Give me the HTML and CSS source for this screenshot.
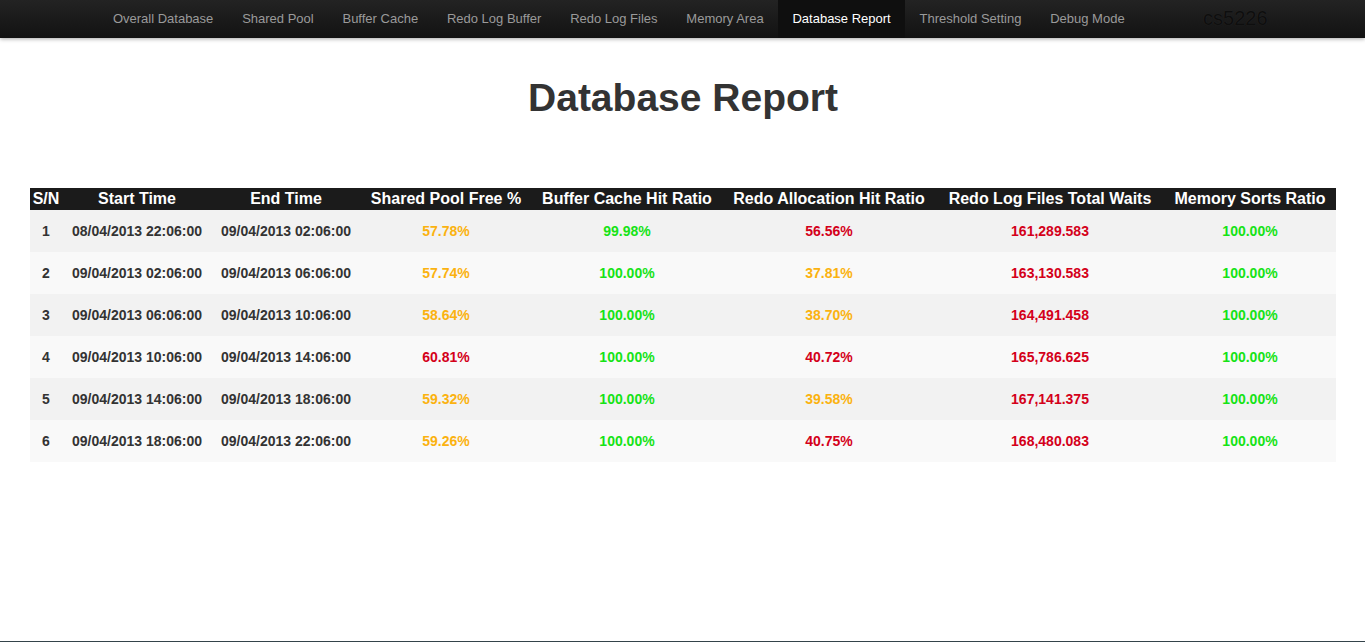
FILE: index.html
```html
<!DOCTYPE html>
<html lang="en">
<head>
<meta charset="utf-8">
<title>Database Report</title>
<link rel="stylesheet" href="styles.css">
</head>
<body>
<header class="navbar">
  <div class="container">
    <ul class="nav">
      <li><a href="#">Overall Database</a></li>
      <li><a href="#">Shared Pool</a></li>
      <li><a href="#">Buffer Cache</a></li>
      <li><a href="#">Redo Log Buffer</a></li>
      <li><a href="#">Redo Log Files</a></li>
      <li><a href="#">Memory Area</a></li>
      <li class="active"><a href="#">Database Report</a></li>
      <li><a href="#">Threshold Setting</a></li>
      <li><a href="#">Debug Mode</a></li>
    </ul>
    <span class="brand">cs5226</span>
  </div>
</header>

<main class="content">
  <h1 class="title">Database Report</h1>
  <table class="report">
    <colgroup>
      <col class="c-sn"><col class="c-start"><col class="c-end"><col class="c-sp">
      <col class="c-bc"><col class="c-ra"><col class="c-rl"><col class="c-ms">
    </colgroup>
    <thead>
      <tr>
        <th>S/N</th><th>Start Time</th><th>End Time</th><th>Shared Pool Free %</th>
        <th>Buffer Cache Hit Ratio</th><th>Redo Allocation Hit Ratio</th><th>Redo Log Files Total Waits</th><th>Memory Sorts Ratio</th>
      </tr>
    </thead>
    <tbody>
      <tr>
        <td>1</td><td>08/04/2013 22:06:00</td><td>09/04/2013 02:06:00</td>
        <td class="warn">57.78%</td><td class="good">99.98%</td><td class="bad">56.56%</td><td class="bad">161,289.583</td><td class="good">100.00%</td>
      </tr>
      <tr>
        <td>2</td><td>09/04/2013 02:06:00</td><td>09/04/2013 06:06:00</td>
        <td class="warn">57.74%</td><td class="good">100.00%</td><td class="warn">37.81%</td><td class="bad">163,130.583</td><td class="good">100.00%</td>
      </tr>
      <tr>
        <td>3</td><td>09/04/2013 06:06:00</td><td>09/04/2013 10:06:00</td>
        <td class="warn">58.64%</td><td class="good">100.00%</td><td class="warn">38.70%</td><td class="bad">164,491.458</td><td class="good">100.00%</td>
      </tr>
      <tr>
        <td>4</td><td>09/04/2013 10:06:00</td><td>09/04/2013 14:06:00</td>
        <td class="bad">60.81%</td><td class="good">100.00%</td><td class="bad">40.72%</td><td class="bad">165,786.625</td><td class="good">100.00%</td>
      </tr>
      <tr>
        <td>5</td><td>09/04/2013 14:06:00</td><td>09/04/2013 18:06:00</td>
        <td class="warn">59.32%</td><td class="good">100.00%</td><td class="warn">39.58%</td><td class="bad">167,141.375</td><td class="good">100.00%</td>
      </tr>
      <tr>
        <td>6</td><td>09/04/2013 18:06:00</td><td>09/04/2013 22:06:00</td>
        <td class="warn">59.26%</td><td class="good">100.00%</td><td class="bad">40.75%</td><td class="bad">168,480.083</td><td class="good">100.00%</td>
      </tr>
    </tbody>
  </table>
</main>
<div class="edge"></div>
</body>
</html>
```

FILE: styles.css
```css
html, body {
  margin: 0;
  padding: 0;
  background: #fff;
  font-family: "Liberation Sans", Arial, sans-serif;
  color: #333;
}

.navbar {
  height: 38px;
  background: linear-gradient(to bottom, #232323, #121212);
  box-shadow: 0 1px 4px rgba(0, 0, 0, 0.35);
}

.container {
  width: 1170px;
  margin: 0 auto;
  display: flex;
  align-items: center;
  height: 38px;
}

.nav {
  list-style: none;
  margin: 0 0 0 1px;
  padding: 0;
  display: flex;
  flex-shrink: 0;
  height: 38px;
}

.nav li {
  display: flex;
  flex-shrink: 0;
}

.nav a {
  display: flex;
  align-items: center;
  padding: 0 14.4px 1px;
  font-size: 13px;
  color: #9a9a9a;
  text-decoration: none;
  white-space: nowrap;
}

.nav .active a {
  background: #0f0f0f;
  color: #fff;
}

.brand {
  margin-left: 64px;
  font-size: 20px;
  color: #0e0e0e;
  text-shadow: 0 0 1px #2c2c2c;
  padding-bottom: 1px;
  white-space: nowrap;
}

.content {
  padding: 0 29px 0 30px;
}

.title {
  margin: 38px 0 68px;
  text-align: center;
  font-size: 39px;
  line-height: 44px;
  font-weight: bold;
  color: #333;
}

.report {
  width: 1306px;
  border-collapse: collapse;
  table-layout: fixed;
}

.c-sn { width: 32px; }
.c-start { width: 150px; }
.c-end { width: 148px; }
.c-sp { width: 172px; }
.c-bc { width: 190px; }
.c-ra { width: 214px; }
.c-rl { width: 228px; }
.c-ms { width: 172px; }

.report th {
  background: #1b1b1b;
  color: #fff;
  font-size: 16px;
  font-weight: bold;
  height: 22px;
  padding: 0;
  line-height: 20px;
  text-align: center;
  white-space: nowrap;
}

.report td {
  height: 42px;
  padding: 0;
  font-size: 14px;
  font-weight: bold;
  text-align: center;
  vertical-align: middle;
  color: #333;
  white-space: nowrap;
}

.report tbody tr:nth-child(odd) td {
  background: #f2f2f2;
}

.report tbody tr:nth-child(even) td {
  background: #f9f9f9;
}

.report td.warn { color: #fbb210; }
.report td.good { color: #16e316; }
.report td.bad { color: #d4001a; }

.edge {
  position: fixed;
  left: 0;
  right: 0;
  bottom: 0;
  height: 1px;
  background: #34434a;
}
```
